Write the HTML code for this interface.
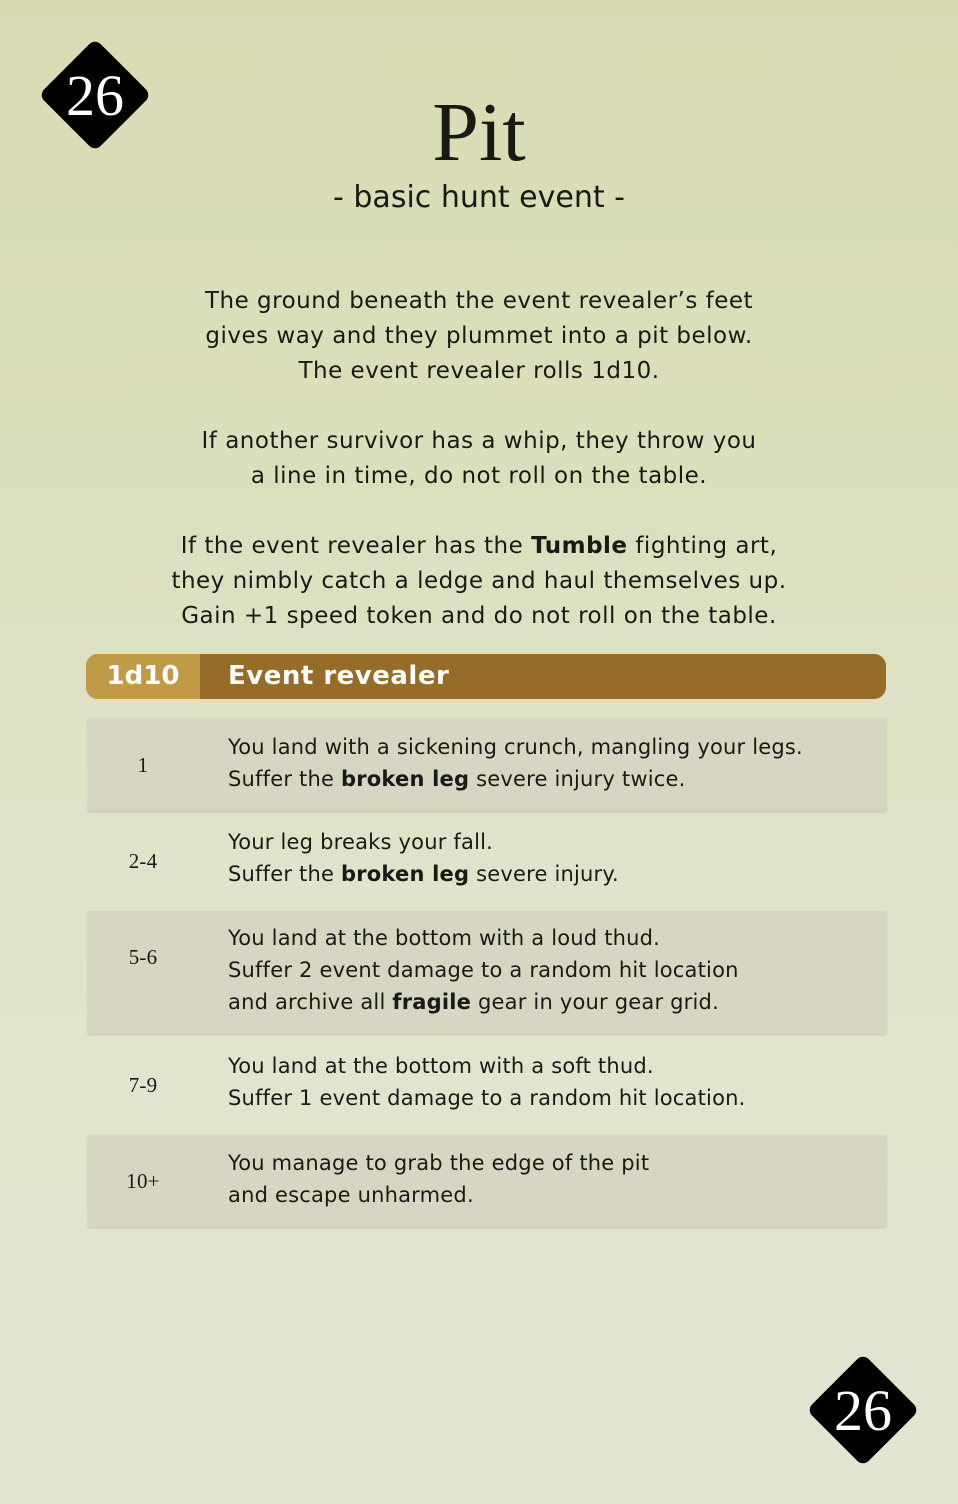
<!DOCTYPE html>
<html><head><meta charset="utf-8"><style>
body{margin:0;width:958px;height:1504px;overflow:hidden;font-family:"DejaVu Sans","Liberation Sans",sans-serif;color:#1a1a14;
background:linear-gradient(180deg,#d9dcb3 0%,#dcdfbd 30%,#e1e3cc 60%,#e3e5d2 100%);position:relative}
.dia{position:absolute;width:80px;height:80px;background:#000;transform:rotate(45deg);border-radius:8px}
.num{position:absolute;color:#fff;font-family:"Liberation Serif",serif;font-size:58px;width:120px;text-align:center}
h1{position:absolute;top:88px;left:0;width:958px;text-align:center;margin:0;font-family:"Liberation Serif",serif;font-weight:normal;font-size:84px;line-height:90px}
.sub{position:absolute;top:180px;width:958px;text-align:center;font-size:30px;color:#1a1a14}
.p{position:absolute;left:0;width:958px;text-align:center;font-size:23px;line-height:35px;color:#1a1a14;letter-spacing:0.5px}
.hdr{position:absolute;left:86px;top:654px;width:800px;height:45px;background:#956c28;border-radius:12px;overflow:hidden;color:#fff;font-weight:bold;font-size:26px}
.hdr .a{position:absolute;left:0;top:0;width:114px;height:45px;background:#c19a45;text-align:center;line-height:45px}
.hdr .b{position:absolute;left:142px;top:0;line-height:45px;letter-spacing:0.5px}
.row{position:absolute;left:88px;width:798px;font-size:21px;line-height:32px;letter-spacing:0.2px}
.g{background:#d6d6c2;box-shadow:0 1px 2px rgba(0,0,0,.15)}
.row .n{position:absolute;left:0;width:110px;text-align:center;font-family:"Liberation Serif",serif}
.row .t{position:absolute;left:140px}
</style></head><body>
<div class="dia" style="left:55px;top:55px"></div><div class="num" style="left:35px;top:62px">26</div>
<div class="dia" style="left:823px;top:1370px"></div><div class="num" style="left:803px;top:1377px">26</div>
<h1>Pit</h1>
<div class="sub">- basic hunt event -</div>
<div class="p" style="top:284px">The ground beneath the event revealer’s feet<br>gives way and they plummet into a pit below.<br>The event revealer rolls 1d10.</div>
<div class="p" style="top:424px">If another survivor has a whip, they throw you<br>a line in time, do not roll on the table.</div>
<div class="p" style="top:529px">If the event revealer has the <b style="font-weight:bold">Tumble</b> fighting art,<br>they nimbly catch a ledge and haul themselves up.<br>Gain +1 speed token and do not roll on the table.</div>
<div class="hdr"><div class="a">1d10</div><div class="b">Event revealer</div></div>
<div class="row g" style="top:718px;height:93px"><div class="n" style="top:31px">1</div><div class="t" style="top:13px">You land with a sickening crunch, mangling your legs.<br>Suffer the <b>broken leg</b> severe injury twice.</div></div>
<div class="row" style="top:813px;height:96px"><div class="n" style="top:32px">2-4</div><div class="t" style="top:13px">Your leg breaks your fall.<br>Suffer the <b>broken leg</b> severe injury.</div></div>
<div class="row g" style="top:911px;height:123px"><div class="n" style="top:30px">5-6</div><div class="t" style="top:11px">You land at the bottom with a loud thud.<br>Suffer 2 event damage to a random hit location<br>and archive all <b>fragile</b> gear in your gear grid.</div></div>
<div class="row" style="top:1037px;height:95px"><div class="n" style="top:32px">7-9</div><div class="t" style="top:13px">You land at the bottom with a soft thud.<br>Suffer 1 event damage to a random hit location.</div></div>
<div class="row g" style="top:1135px;height:92px"><div class="n" style="top:30px">10+</div><div class="t" style="top:12px">You manage to grab the edge of the pit<br>and escape unharmed.</div></div>
</body></html>
